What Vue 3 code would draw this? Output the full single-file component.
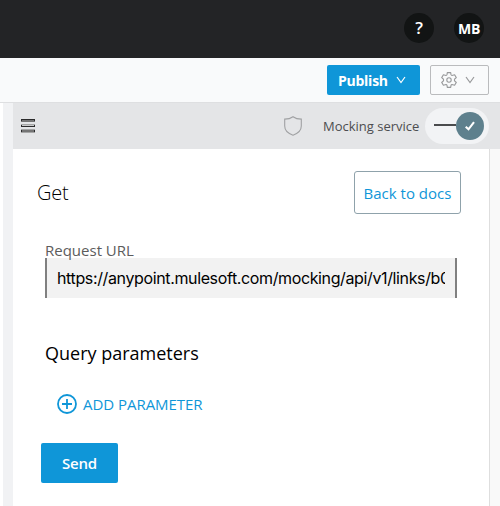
<script setup>
import { ref } from 'vue'

const requestUrl = ref('https://anypoint.mulesoft.com/mocking/api/v1/links/b0')
</script>

<template>
  <div class="app">
    <header class="topbar">
      <div class="avatar help">?</div>
      <div class="avatar">MB</div>
    </header>

    <div class="toolbar">
      <button class="publish">
        <span>Publish</span>
        <svg width="10" height="8" viewBox="0 0 10 8"><path d="M1 1 5 6.500 9 1" fill="none" stroke="currentColor" stroke-width="1.200" /></svg>
      </button>
      <button class="settings">
        <svg width="16" height="16" viewBox="0 0 16 16" fill="none" stroke="currentColor" stroke-width="1.100" stroke-linejoin="round">
          <path d="M6.300.6h3.400L10 2.700q.2.700 1 .8l2.600-.7 1.700 2.800L13.700 7q-.6 1 0 2l1.600 1.400-1.700 2.800-2.600-.7q-.8.100-1 .8l-.3 2.100H6.300L6 13.300q-.2-.7-1-.8l-2.600.7L.7 10.400 2.300 9q.6-1 0-2L.7 5.600l1.700-2.800 2.600.7q.8-.1 1-.8z" />
          <circle cx="8" cy="8" r="2.200" />
        </svg>
        <svg width="10" height="8" viewBox="0 0 10 8"><path d="M1 1 5 6.500 9 1" fill="none" stroke="currentColor" stroke-width="1.200" /></svg>
      </button>
    </div>

    <div class="body">
      <div class="gutter"></div>
      <div class="content">
        <div class="service">
          <svg class="menu" width="14" height="14" viewBox="0 0 14 14" shape-rendering="crispEdges">
            <path d="M0 0h14v2H0zM0 6h14v2H0zM0 11h14v2H0z" fill="#2b2b2c" />
            <path d="M1 1h12v2H1zM0 2h14v1H0zM1 11h12v2H1z" fill="#747474" />
            <path d="M0 5h14v1H0zM0 10h14v1H0zM0 13h14v1H0z" fill="#a5a6a6" />
            <path d="M1 6h12v1H1z" fill="#c8c9ca" />
          </svg>
          <svg class="shield" width="18" height="20" viewBox="0 0 18 20"><path d="M9 .7C6.500 2.500 4 3.100.7 3.100v7c0 4.500 3.500 7.500 8.300 9.100 4.800-1.600 8.300-4.600 8.300-9.100v-7C14 3.100 11.500 2.500 9 .7z" fill="none" stroke="#a0a1a3" stroke-width="1.100" /></svg>
          <span class="service-name">Mocking service</span>
          <div class="toggle">
            <span class="track"></span>
            <span class="knob">
              <svg width="10" height="10" viewBox="0 0 10 10"><path d="M.7 5.700 3.500 8.300 9 1.200" fill="none" stroke="#fff" stroke-width="2.100" /></svg>
            </span>
          </div>
        </div>

        <div class="columns">
          <main class="panel">
            <div class="title-row">
              <h1>Get</h1>
              <button class="back">Back to docs</button>
            </div>
            <label class="label">Request URL</label>
            <div class="url"><div class="url-text">{{ requestUrl }}</div></div>
            <h2>Query parameters</h2>
            <button class="add">
              <svg width="20" height="20" viewBox="0 0 20 20" fill="none" stroke="currentColor" stroke-width="1.800"><circle cx="10" cy="10" r="9" /><path d="M10 5v10M5 10h10" /></svg>
              <span>ADD PARAMETER</span>
            </button>
            <button class="send">Send</button>
          </main>
          <aside class="side"></aside>
        </div>
      </div>
    </div>
  </div>
</template>

<style>
body { margin: 0; }
</style>

<style scoped>
* { box-sizing: border-box; }
.app {
  width: 500px;
  height: 506px;
  display: flex;
  flex-direction: column;
  overflow: hidden;
  background: #fff;
  font-family: "Open Sans", sans-serif;
}
button {
  font-family: inherit;
  padding: 0;
  border: 0;
  background: none;
  white-space: nowrap;
  display: flex;
  align-items: center;
}
svg { display: block; flex: none; }
.topbar {
  height: 58px;
  flex: none;
  display: flex;
  justify-content: flex-end;
  align-items: center;
  gap: 20px;
  padding: 0 16px 2px 0;
  background: #232426;
}
.avatar {
  width: 30px;
  height: 30px;
  border-radius: 50%;
  background: #121414;
  color: #fff;
  font-size: 14px;
  font-weight: 700;
  letter-spacing: -0.3px;
  line-height: 32px;
  text-align: center;
}
.help { font-size: 17px; font-weight: 600; line-height: 30px; }
.toolbar {
  height: 45px;
  flex: none;
  display: flex;
  justify-content: flex-end;
  gap: 10px;
  padding: 7px 11px 0 0;
  background: #f9fafb;
  border-bottom: 1px solid #dedfe1;
}
.publish {
  width: 93px;
  height: 30px;
  padding-left: 11px;
  gap: 8px;
  border-radius: 2px;
  background: #0f96d8;
  color: #fff;
  font-size: 14px;
  font-weight: 700;
  letter-spacing: -0.25px;
}
.settings {
  width: 59px;
  height: 30px;
  padding-left: 10px;
  gap: 8px;
  border: 1px solid #babbbd;
  border-radius: 2px;
  color: #98999b;
}
.body { flex: 1; display: flex; min-height: 0; }
.gutter {
  width: 13px;
  flex: none;
  border-left: 3px solid #fff;
  background: #f1f2f4;
}
.content { flex: 1; min-width: 0; display: flex; flex-direction: column; }
.service {
  height: 46px;
  flex: none;
  display: flex;
  align-items: center;
  padding: 0 11px 0 8px;
  background: #e4e5e7;
}
.shield { margin-left: auto; }
.service-name {
  width: 97px;
  margin: 0 5px 0 21px;
  color: #4c4d50;
  font-size: 13px;
  white-space: nowrap;
}
.toggle {
  width: 64px;
  height: 36px;
  padding: 0 5px 0 9px;
  border-radius: 18px;
  display: flex;
  align-items: center;
  background: #f2f3f5;
}
.track { width: 22px; height: 2px; background: #4a4b4d; margin-bottom: 2px; }
.knob {
  width: 28px;
  height: 28px;
  border-radius: 50%;
  display: grid;
  place-items: center;
  background: #5e808d;
}
.columns { flex: 1; display: flex; min-height: 0; }
.panel {
  width: 476px;
  flex: none;
  padding: 22px 28px 0;
  display: flex;
  flex-direction: column;
  align-items: flex-start;
}
.side { flex: 1; border-left: 1px solid #dedede; background: #f9f9f9; }
.title-row {
  width: 448px;
  height: 43px;
  margin-left: -28px;
  padding-left: 24px;
  display: flex;
  justify-content: space-between;
}
h1 { margin: 0; font-size: 20px; font-weight: 300; letter-spacing: -0.2px; line-height: 43px; color: #000; }
.back {
  width: 107px;
  height: 43px;
  justify-content: center;
  border: 1px solid #8fa2ab;
  border-radius: 3px;
  color: #0f96d8;
  font-size: 15px;
}
.label {
  z-index: 1;
  height: 20px;
  margin: 24px 0 0 4px;
  color: #5c5c5c;
  font-size: 15px;
  line-height: 24px;
}
.url {
  width: 412px;
  height: 40px;
  margin-left: 4px;
  padding: 0 10px;
  border: solid #808080;
  border-width: 0 2px;
  background: #f2f2f2;
}
.url-text {
  overflow: hidden;
  white-space: nowrap;
  font-family: Inter, sans-serif;
  font-size: 16px;
  letter-spacing: -0.37px;
  line-height: 40px;
  color: #000;
}
h2 { margin: 41px 0 0 4px; font-size: 18px; font-weight: 400; line-height: 28px; color: #000; }
.add { height: 20px; margin: 27px 0 0 16px; gap: 6px; color: #0f96d8; font-size: 15px; letter-spacing: -0.04px; }
.send {
  width: 77px;
  height: 40px;
  margin-top: 29px;
  justify-content: center;
  border-radius: 2px;
  background: #0f96d8;
  color: #fff;
  font-size: 15px;
  font-weight: 600;
  letter-spacing: -0.25px;
}
</style>
